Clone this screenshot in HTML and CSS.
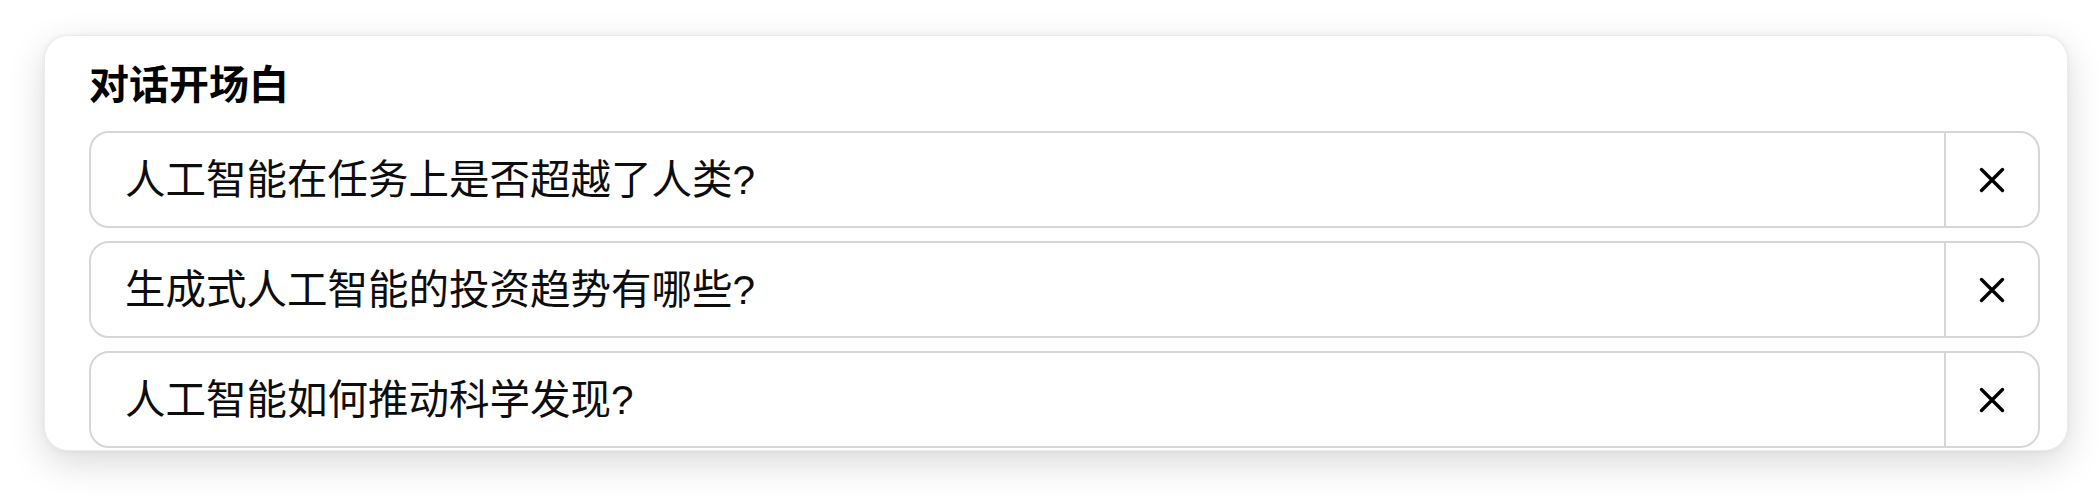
FILE: index.html
```html
<!DOCTYPE html>
<html lang="zh">
<head>
<meta charset="utf-8">
<title>对话开场白</title>
<link rel="stylesheet" href="styles.css">
</head>
<body>
<div class="page">
  <section class="card">
    <h2 class="title">对话开场白</h2>
    <div class="list">
      <div class="row">
        <div class="row-text">人工智能在任务上是否超越了人类?</div>
        <button class="row-close" aria-label="删除">
          <svg class="x-icon" viewBox="0 0 26 26" width="26" height="26"><path d="M2.5 2.5 L23.5 23.5 M23.5 2.5 L2.5 23.5"/></svg>
        </button>
      </div>
      <div class="row">
        <div class="row-text">生成式人工智能的投资趋势有哪些?</div>
        <button class="row-close" aria-label="删除">
          <svg class="x-icon" viewBox="0 0 26 26" width="26" height="26"><path d="M2.5 2.5 L23.5 23.5 M23.5 2.5 L2.5 23.5"/></svg>
        </button>
      </div>
      <div class="row">
        <div class="row-text">人工智能如何推动科学发现?</div>
        <button class="row-close" aria-label="删除">
          <svg class="x-icon" viewBox="0 0 26 26" width="26" height="26"><path d="M2.5 2.5 L23.5 23.5 M23.5 2.5 L2.5 23.5"/></svg>
        </button>
      </div>
    </div>
  </section>
</div>
</body>
</html>
```
FILE: styles.css
```css
html, body {
  margin: 0;
  padding: 0;
  background: #ffffff;
}
body {
  font-family: "Liberation Sans", "Noto Sans CJK SC", sans-serif;
  color: #000;
}
.page {
  box-sizing: border-box;
  min-height: 496px;
  padding: 35px 31px 0 44px;
}
.card {
  box-sizing: border-box;
  width: 2024px;
  height: 416px;
  background: #fff;
  border: 1px solid #ebebeb;
  border-radius: 24px;
  box-shadow: 0 12px 36px rgba(0, 0, 0, 0.15), 0 0 6px rgba(0, 0, 0, 0.05);
  padding: 25px 27px 0 44px;
  overflow: hidden;
}
.title {
  margin: 0;
  font-size: 40px;
  line-height: 48px;
  font-weight: 700;
}
.list {
  margin-top: 22px;
  display: flex;
  flex-direction: column;
  gap: 13px;
}
.row {
  box-sizing: border-box;
  height: 97px;
  display: flex;
  align-items: stretch;
  border: 2px solid #d6d6da;
  border-radius: 20px;
  background: #fff;
}
.row-text {
  flex: 1;
  display: flex;
  align-items: center;
  padding-left: 34px;
  font-size: 40.5px;
  line-height: 48px;
  color: #0d0d0d;
}
.row-close {
  width: 94px;
  border: 0;
  border-left: 2px solid #d6d6da;
  background: transparent;
  padding: 0;
  display: flex;
  align-items: center;
  justify-content: center;
  cursor: pointer;
}
.x-icon path {
  fill: none;
  stroke: #000;
  stroke-width: 3.4;
  stroke-linecap: round;
}
```
